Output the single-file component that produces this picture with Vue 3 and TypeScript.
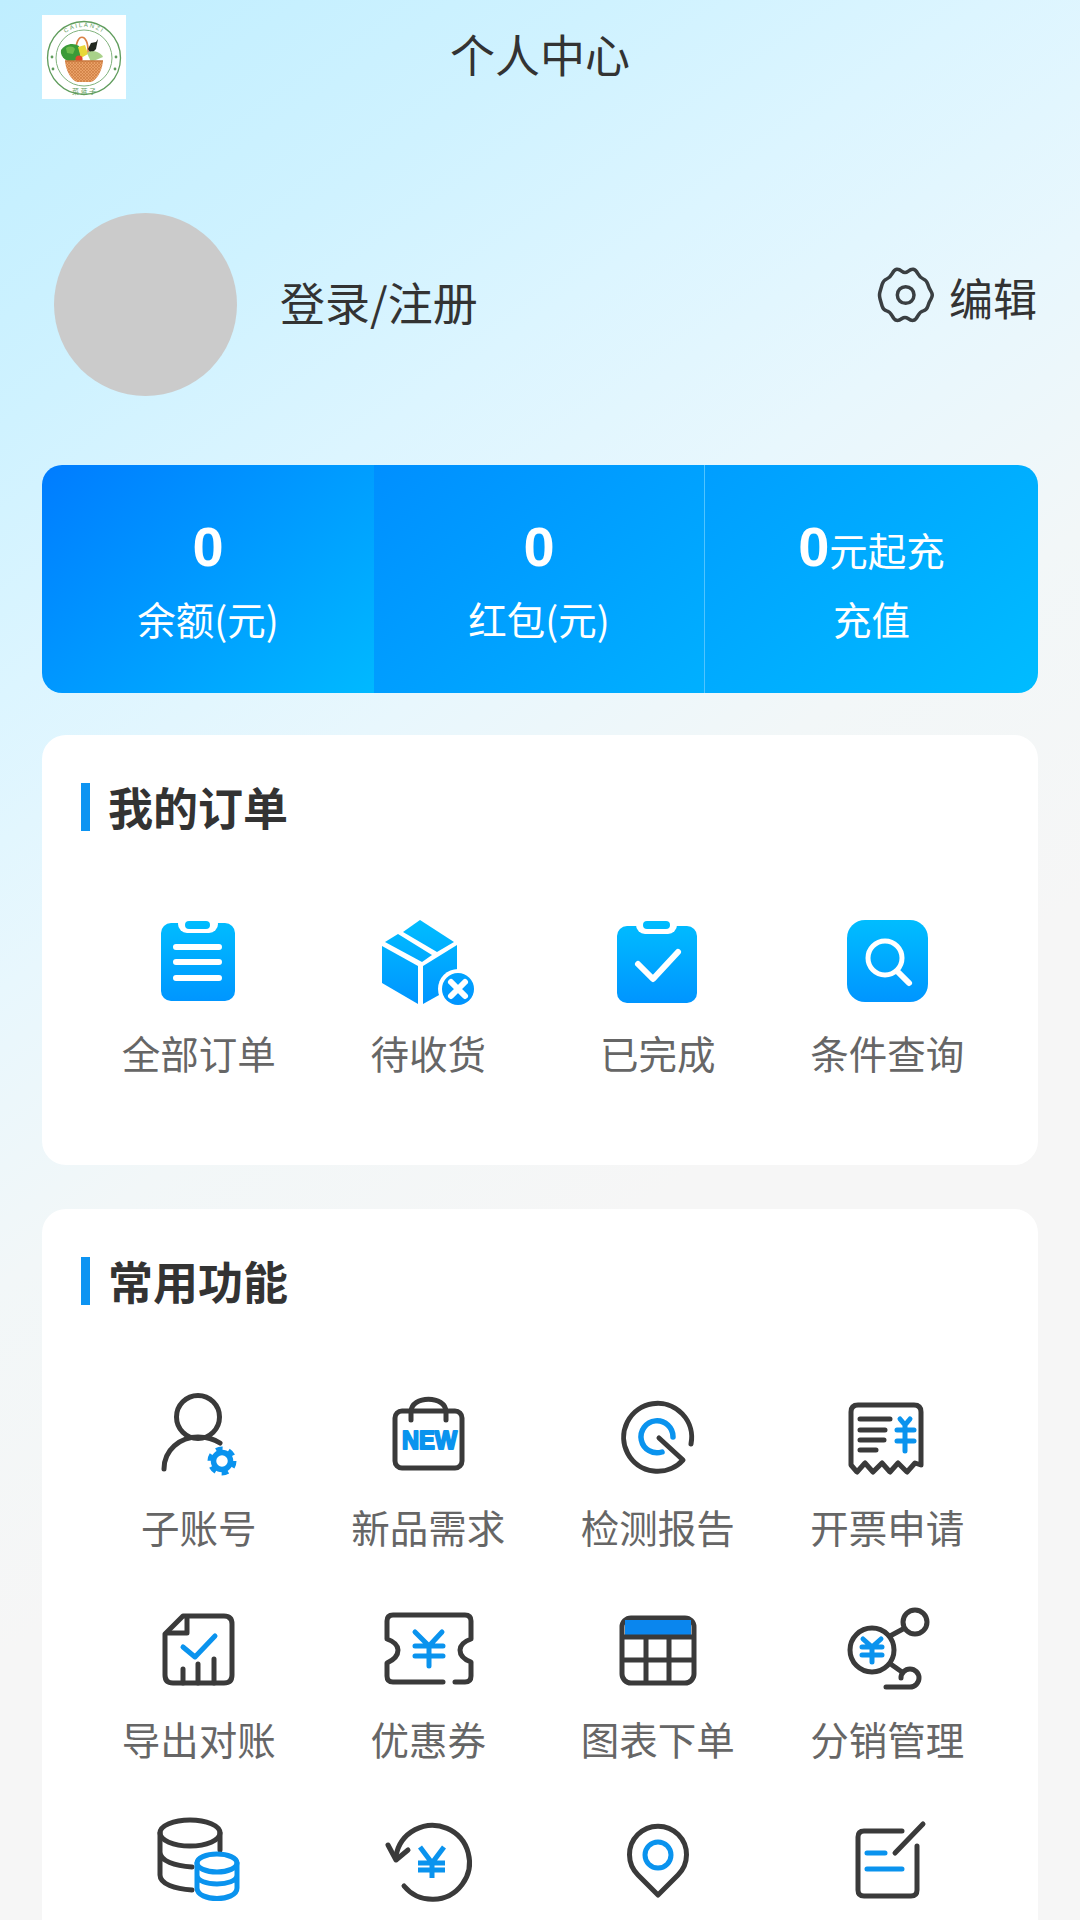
<script setup lang="ts">
type Pt = [number, number]
const cog: Pt[] = [
  [120, 56], [138, 42], [152, 44], [165, 68], [185, 76], [192, 100], [205, 120], [192, 142],
  [185, 165], [165, 170], [152, 195], [138, 197], [120, 184], [102, 197], [88, 195], [75, 170],
  [55, 165], [48, 142], [42, 120], [48, 100], [55, 76], [75, 68], [88, 44], [102, 42]
]
function smooth(points: Pt[]): string {
  const mid = (a: Pt, b: Pt): string => `${(a[0] + b[0]) / 2} ${(a[1] + b[1]) / 2}`
  const n = points.length
  let d = `M${mid(points[n - 1], points[0])}`
  points.forEach((p, i) => {
    d += ` Q${p[0]} ${p[1]} ${mid(p, points[(i + 1) % n])}`
  })
  return d + 'Z'
}
const gear = smooth(cog)
</script>

<template>
  <div class="page">
    <svg class="defs" width="0" height="0" aria-hidden="true">
      <defs>
        <linearGradient id="ig" gradientUnits="userSpaceOnUse" x1="0" y1="920" x2="0" y2="1005">
          <stop offset="0" stop-color="#00bdff" />
          <stop offset="1" stop-color="#0094ff" />
        </linearGradient>
        <pattern id="weave" width="3" height="3" patternUnits="userSpaceOnUse">
          <rect width="3" height="3" fill="#e9a066" />
          <path d="M0 0L3 3M3 0L0 3" stroke="#c9773d" stroke-width="0.6" />
        </pattern>
      </defs>
    </svg>

    <header class="top">
      <svg class="logo" viewBox="0 0 84 84" aria-hidden="true">
        <rect width="84" height="84" fill="#fff" />
        <circle cx="42" cy="43" r="36.5" fill="none" stroke="#5f9c5c" stroke-width="1.3" />
        <circle cx="42" cy="43" r="28" fill="none" stroke="#7fb27c" stroke-width="1" />
        <path id="logoArc" d="M11 43A31 31 0 0 1 73 43" fill="none" />
        <text class="logo-t"><textPath href="#logoArc" startOffset="50%" text-anchor="middle">CAILANZI</textPath></text>
        <text class="logo-c" x="42" y="79" text-anchor="middle">菜 蓝 子</text>
        <circle cx="10" cy="42" r="1.4" fill="#5f9c5c" /><circle cx="74" cy="42" r="1.4" fill="#5f9c5c" />
        <circle cx="11" cy="54" r="1.4" fill="#5f9c5c" /><circle cx="73" cy="54" r="1.4" fill="#5f9c5c" />
        <path d="M34 38C33 17 47 17 46 38" fill="none" stroke="#d98145" stroke-width="1.7" />
        <path d="M19 35c4-6 12-8 18-4l2 13-11 3c-6-2-10-7-9-12z" fill="#3a9a38" />
        <path d="M24 33c3-2 7-2 9 1l-2 5-6-1z" fill="#6cbb4d" />
        <path d="M36 32l7-2 3 9-7 4z" fill="#e8d83a" />
        <path d="M46 34l3-6 5-1 2-3-2 10-5 5z" fill="#22291f" />
        <path d="M45 38c4-3 13-2 16 4l-12 5z" fill="#a9d28a" />
        <circle cx="37" cy="44" r="3.6" fill="#e0492d" />
        <path d="M23 46H61C60 56 55 65 49 67H35C29 65 24 56 23 46Z" fill="url(#weave)" />
        <path d="M23 46H61" stroke="#c9773d" stroke-width="1.4" />
      </svg>
      <h1 class="title">个人中心</h1>
      <span></span>
    </header>

    <section class="profile">
      <div class="avatar"></div>
      <div class="name">登录/注册</div>
      <div class="edit">
        <svg class="gear" viewBox="30 30 180 180" aria-hidden="true">
          <path :d="gear" fill="none" stroke="#3a3f42" stroke-width="10.5" stroke-linejoin="round" />
          <circle cx="122" cy="120" r="25" fill="none" stroke="#3a3f42" stroke-width="10.5" />
        </svg>
        <span>编辑</span>
      </div>
    </section>

    <section class="stats">
      <div class="stat s1"><div class="num">0</div><div class="cap">余额(元)</div></div>
      <div class="stat s2"><div class="num">0</div><div class="cap">红包(元)</div></div>
      <div class="stat s3"><div class="num">0<span class="unit">元起充</span></div><div class="cap">充值</div></div>
    </section>

    <section class="card orders">
      <h2 class="head">我的订单</h2>
      <div class="grid">
        <div class="item">
          <svg viewBox="139 910 120 100" aria-hidden="true">
            <rect x="161" y="923" width="74" height="78" rx="10" fill="url(#ig)" />
            <rect x="178" y="915" width="40" height="18" rx="9" fill="#fff" />
            <rect x="185" y="921" width="25" height="8" rx="4" fill="url(#ig)" />
            <path d="M176 947H219M176 962H219M176 978H219" class="w" />
          </svg>
          <div class="lab">全部订单</div>
        </div>
        <div class="item">
          <svg viewBox="368 910 120 100" aria-hidden="true">
            <path d="M420 920L454 942L437 952L403 932Z" fill="url(#ig)" />
            <path d="M398 934L432 955L422 962L385 942Z" fill="url(#ig)" />
            <path d="M382 946L418 966V1004L382 983Z" fill="url(#ig)" />
            <path d="M423 966L457 945V985L423 1004Z" fill="url(#ig)" />
            <circle cx="458" cy="989" r="20" fill="#fff" />
            <circle cx="458" cy="989" r="16" fill="url(#ig)" />
            <path d="M451 982L465 996M465 982L451 996" class="w" />
          </svg>
          <div class="lab">待收货</div>
        </div>
        <div class="item">
          <svg viewBox="598 910 120 100" aria-hidden="true">
            <rect x="617" y="926" width="80" height="77" rx="10" fill="url(#ig)" />
            <rect x="636" y="915" width="41" height="19" rx="9" fill="#fff" />
            <rect x="643" y="921" width="27" height="8" rx="4" fill="url(#ig)" />
            <path d="M638 964L653 979L678 952" class="w" />
          </svg>
          <div class="lab">已完成</div>
        </div>
        <div class="item">
          <svg viewBox="827 910 120 100" aria-hidden="true">
            <rect x="847" y="920" width="81" height="82" rx="18" fill="url(#ig)" />
            <circle cx="885" cy="958" r="17" fill="none" stroke="#fff" stroke-width="5" />
            <path d="M899 973L909 983" class="w" />
          </svg>
          <div class="lab">条件查询</div>
        </div>
      </div>
    </section>

    <section class="card funcs">
      <h2 class="head">常用功能</h2>
      <div class="grid">
        <div class="item">
          <svg viewBox="139 1384 120 100" aria-hidden="true">
            <circle cx="198" cy="1417" r="21.5" class="d" />
            <path d="M164 1469C164 1450 180 1437 198 1437C206 1437 214 1439 220 1443" class="d" />
            <circle cx="222" cy="1461" r="8.5" class="b fat" />
            <circle cx="222" cy="1461" r="12" class="b gt" />
          </svg>
          <div class="lab">子账号</div>
        </div>
        <div class="item">
          <svg viewBox="368 1384 120 100" aria-hidden="true">
            <rect x="395" y="1411" width="67" height="57" rx="7" class="d" />
            <path d="M411 1420V1412C411 1395 446 1395 446 1412V1420" class="d" />
            <text class="new" x="402" y="1449" textLength="55" lengthAdjust="spacingAndGlyphs">NEW</text>
          </svg>
          <div class="lab">新品需求</div>
        </div>
        <div class="item">
          <svg viewBox="598 1384 120 100" aria-hidden="true">
            <path d="M691 1444A34 34 0 1 0 683 1460L659 1438" class="d" />
            <path d="M662 1452A16 16 0 1 1 673 1437" class="b fat" />
          </svg>
          <div class="lab">检测报告</div>
        </div>
        <div class="item">
          <svg viewBox="827 1384 120 100" aria-hidden="true">
            <path d="M851 1465V1412Q851 1405 858 1405H914Q921 1405 921 1412V1465L915 1463L907 1472L898 1463L890 1472L882 1463L873 1472L865 1463L857 1472Z" class="d" />
            <path d="M860 1419H890M860 1430H885M860 1440H884M860 1450H876" class="d" />
            <path d="M900 1419L905 1425L910 1419M905 1425V1451M897 1430H914M897 1441H914" class="b" />
          </svg>
          <div class="lab">开票申请</div>
        </div>

        <div class="item">
          <svg viewBox="139 1596 120 100" aria-hidden="true">
            <path d="M183 1616H224Q232 1616 232 1624V1675Q232 1683 224 1683H173Q165 1683 165 1675V1634Z" class="d" />
            <path d="M187 1617V1633H167" class="d" />
            <path d="M183 1647L195 1657L215 1636" class="b" />
            <path d="M183 1669V1683M198 1664V1683M214 1659V1683" class="d" />
          </svg>
          <div class="lab">导出对账</div>
        </div>
        <div class="item">
          <svg viewBox="368 1596 120 100" aria-hidden="true">
            <path d="M443 1682H393Q387 1682 387 1676V1663Q398 1658 398 1650Q398 1643 387 1639V1621Q387 1615 393 1615H465Q471 1615 471 1621V1639Q460 1643 460 1650Q460 1658 471 1662V1676Q471 1682 465 1682H455" class="d" />
            <path d="M415 1632L429 1646L442 1632M415 1646H443M415 1656H443M429 1646V1666" class="b" />
          </svg>
          <div class="lab">优惠券</div>
        </div>
        <div class="item">
          <svg viewBox="598 1596 120 100" aria-hidden="true">
            <rect x="622" y="1618" width="72" height="65" rx="9" class="d" />
            <path d="M625 1620H691V1635H625Z" fill="#0a86ee" />
            <path d="M622 1637H694M622 1660H694M646 1637V1683M669 1637V1683" class="d butt" />
          </svg>
          <div class="lab">图表下单</div>
        </div>
        <div class="item">
          <svg viewBox="827 1596 120 100" aria-hidden="true">
            <circle cx="872" cy="1650" r="22" class="d" />
            <circle cx="915" cy="1622" r="12" class="d" />
            <path d="M890 1636L903 1629M892 1665L902 1672" class="d" />
            <path d="M886 1687H910A9 9 0 1 0 901 1678" class="d" />
            <path d="M863 1639L872 1647L881 1639M862 1647H882M862 1655H882M872 1647V1662" class="b" />
          </svg>
          <div class="lab">分销管理</div>
        </div>

        <div class="item">
          <svg viewBox="139 1808 120 100" aria-hidden="true">
            <ellipse cx="190" cy="1833" rx="30" ry="13" class="d" />
            <path d="M160 1833V1875C160 1884 175 1889 192 1890M160 1852C160 1861 175 1866 192 1867M220 1833V1850" class="d" />
            <ellipse cx="217" cy="1863" rx="20" ry="9" class="b" />
            <path d="M197 1863V1888C197 1902 237 1902 237 1888V1863M197 1875C197 1887 237 1887 237 1875" class="b" />
          </svg>
        </div>
        <div class="item">
          <svg viewBox="368 1808 120 100" aria-hidden="true">
            <path d="M404 1886A37 37 0 1 0 396 1856" class="d" />
            <path d="M388 1845L396 1860L408 1850" class="d" />
            <path d="M420 1847L432 1863L444 1847M418 1863H445M418 1870H445M432 1863V1878" class="b butt" />
          </svg>
        </div>
        <div class="item">
          <svg viewBox="598 1808 120 100" aria-hidden="true">
            <path d="M658 1895L638 1875A28.5 28.5 0 1 1 678 1875Z" class="d" />
            <circle cx="658" cy="1855" r="13" class="b" />
          </svg>
        </div>
        <div class="item">
          <svg viewBox="827 1808 120 100" aria-hidden="true">
            <path d="M902 1831H864Q858 1831 858 1837V1890Q858 1896 864 1896H911Q917 1896 917 1890V1846" class="d" />
            <path d="M895 1853L923 1824" class="d" />
            <path d="M867 1853H885M867 1869H902" class="b" />
          </svg>
        </div>
      </div>
    </section>
  </div>
</template>

<style scoped>
.page {
  width: 1080px;
  height: 1920px;
  overflow: hidden;
  box-sizing: border-box;
  padding: 15px 42px 0;
  font-family: "Noto Sans CJK SC", "Noto Sans", sans-serif;
  color: #333;
  background: linear-gradient(145deg, #bfeeff 0%, #cff2ff 16%, #dcf5ff 26%, #e8f7fd 37%, #f2f7f8 48%, #f6f6f6 62%, #f6f6f6 100%);
}
.defs { position: absolute; }
.top {
  display: grid;
  grid-template-columns: 1fr auto 1fr;
  align-items: center;
  height: 84px;
}
.logo { width: 84px; height: 84px; display: block; }
.logo-t { font: 6px "Liberation Sans", sans-serif; fill: #5f9c5c; letter-spacing: 1.6px; }
.logo-c { font: 7px "Noto Sans CJK SC", sans-serif; fill: #5f9c5c; }
.title {
  margin: 0;
  font-size: 45px;
  font-weight: 400;
  line-height: 60px;
  color: #333;
  transform: translateY(-3px);
}
.profile {
  display: flex;
  align-items: center;
  margin-top: 114px;
  padding: 0 1px 0 12px;
}
.avatar {
  width: 183px;
  height: 183px;
  border-radius: 50%;
  background: #cbcbcb;
}
.name {
  margin-left: 43px;
  margin-bottom: 5px;
  font-size: 45px;
  line-height: 60px;
  color: #333;
}
.edit {
  margin-left: auto;
  margin-bottom: 16px;
  display: flex;
  align-items: center;
  gap: 14px;
  font-size: 44px;
  line-height: 60px;
  color: #333;
}
.gear { width: 60px; height: 60px; display: block; margin-bottom: 3px; }
.stats {
  display: flex;
  height: 228px;
  margin-top: 69px;
  border-radius: 20px;
  overflow: hidden;
  color: #fff;
}
.stat {
  flex: none;
  display: flex;
  flex-direction: column;
  align-items: center;
  text-align: center;
  box-sizing: border-box;
  padding-top: 50px;
}
.s1 { width: 332px; background: linear-gradient(140deg, #007cff 0%, #00b9ff 100%); }
.s2 { width: 330px; background: linear-gradient(140deg, #008fff 0%, #00b0ff 100%); }
.s3 { width: 334px; background: linear-gradient(140deg, #009eff 0%, #00bcff 100%); border-left: 1px solid #4fc4ff; }
.num {
  height: 64px;
  font-family: "Liberation Sans", sans-serif;
  font-size: 56px;
  font-weight: 700;
  line-height: 64px;
}
.unit {
  font-family: "Noto Sans CJK SC", sans-serif;
  font-size: 38.5px;
  font-weight: 400;
  line-height: 1;
}
.cap { margin-top: 13px; font-size: 38.5px; line-height: 52px; }
.card {
  background: #fff;
  border-radius: 24px;
  padding: 48px 36px 0 42px;
}
.orders { margin-top: 42px; height: 430px; box-sizing: border-box; }
.funcs { margin-top: 44px; height: 760px; box-sizing: border-box; }
.head {
  position: relative;
  margin: 0 0 0 -3px;
  padding-left: 27px;
  font-size: 45px;
  font-weight: 700;
  line-height: 48px;
  color: #333;
}
.head::before {
  content: "";
  position: absolute;
  left: 0;
  top: 0;
  width: 9px;
  height: 48px;
  background: #0d94f2;
}
.grid {
  display: grid;
  grid-template-columns: repeat(4, 1fr);
  row-gap: 43px;
  margin-top: 79px;
}
.item { display: flex; flex-direction: column; align-items: center; min-height: 169px; }
.item svg { width: 120px; height: 100px; display: block; overflow: visible; }
.lab { margin-top: 17px; font-size: 38.5px; line-height: 50px; color: #666; white-space: nowrap; }
.d { fill: none; stroke: #3a3a3a; stroke-width: 5; stroke-linecap: round; stroke-linejoin: round; }
.b { fill: none; stroke: #0a93ee; stroke-width: 5; stroke-linecap: round; stroke-linejoin: round; }
.butt { stroke-linecap: butt; }
.fat { stroke-width: 5.5; }
.gt { stroke-width: 5; stroke-dasharray: 6.5 6.07; stroke-linecap: butt; }
.w { fill: none; stroke: #fff; stroke-width: 6; stroke-linecap: round; stroke-linejoin: round; }
.new {
  font: 700 25px "Liberation Sans", sans-serif;
  fill: #0a93ee;
  stroke: #0a93ee;
  stroke-width: 2;
  stroke-linejoin: round;
}
</style>
